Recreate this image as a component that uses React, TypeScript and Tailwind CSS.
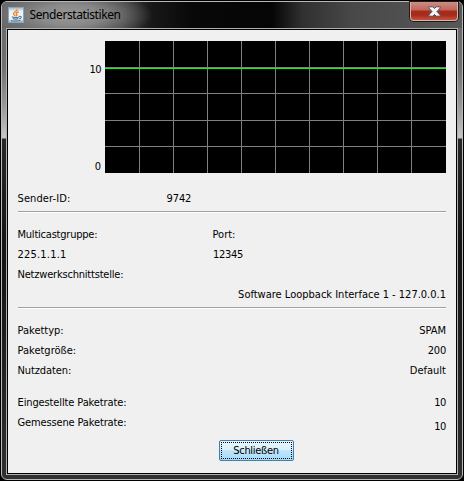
import React from "react";

const verticals = [34, 68, 102, 136, 170, 204, 238, 272, 306];
const horizontals = [26, 52, 79, 105];

function JavaIcon() {
  return (
    <svg className="h-4 w-4 shrink-0" viewBox="0 0 16 16">
      <defs>
        <linearGradient id="tile" x1="0" y1="0" x2="0" y2="1">
          <stop offset="0" stopColor="#9db8c9" />
          <stop offset=".25" stopColor="#eef1f3" />
          <stop offset=".75" stopColor="#f2f4f5" />
          <stop offset="1" stopColor="#8aa9bf" />
        </linearGradient>
      </defs>
      <rect x=".5" y=".5" width="15" height="15" fill="url(#tile)" stroke="#86a6bd" />
      <path d="M9.300 2.200C9.500 4.200 5.300 4.800 5.500 6.800C5.600 7.900 7 8.100 7.200 9.300M10.800 5C8 5.500 7.600 6.500 8.600 7.400C9.200 8.100 8.800 8.700 8.200 9.200" fill="none" stroke="#ee7f22" strokeWidth="1.300" />
      <path d="M3.800 9.800C5 10.700 9.500 10.600 11 9.900M4.800 11.600C6.500 12.200 8.800 12.200 10.300 11.600M3 13.400C5.500 14.200 10.500 14.100 12.500 13.200M11 9.500C14.200 8.700 13.800 11.400 11 11.800" fill="none" stroke="#4f7a9d" strokeWidth="1.100" />
    </svg>
  );
}

function CloseButton() {
  return (
    <div className="mr-[4px] flex h-[19px] w-[48px] items-center justify-center rounded-b-[4px] border border-t-0 border-[#d0b4ae] bg-[linear-gradient(#c98d86_0px,#c2665a_8px,#a62c1c_9px,#a52a1c_13px,#c4523c_18px)] shadow-[0_0_0_1px_#2a1816]">
      <svg className="h-[11px] w-[13px]" viewBox="0 0 13 11">
        <path d="M.8 .8H4.800L6.500 2.500L8.200 .8H12.200V2L9 5.500L12.200 9V10.200H8.200L6.500 8.500L4.800 10.200H.8V9L4 5.500L.8 2Z" fill="#f4f4f4" stroke="#4a5266" strokeWidth="1" />
      </svg>
    </div>
  );
}

function Chart() {
  return (
    <div className="flex h-[132px]">
      <div className="flex w-[83.5px] shrink-0 flex-col items-end justify-between pt-[22px] -mb-px">
        <span className="tracking-[-0.5px]">10</span>
        <span>0</span>
      </div>
      <svg className="ml-[4px] h-[132px] w-[341px] shrink-0" viewBox="0 0 341 132" shapeRendering="crispEdges">
        <rect width="341" height="132" fill="#000" />
        {verticals.map((x) => (
          <rect key={x} x={x} y="0" width="1" height="132" fill="#808080" />
        ))}
        {horizontals.map((y) => (
          <rect key={y} x="0" y={y} width="341" height="1" fill="#808080" />
        ))}
        <rect y="27" width="341" height="1" fill="#00ff00" />
      </svg>
    </div>
  );
}

function Rule() {
  return <div className="ml-[0.5px] h-[2px] shrink-0 border-t border-[#a0a0a0] bg-white" />;
}

export default function App() {
  return (
    <div className="h-[481px] w-[464px] overflow-hidden bg-black p-px font-['DejaVu_Sans_Condensed','DejaVu_Sans',sans-serif] text-[11px] leading-[14px] text-black [font-stretch:condensed]">
      <div className="flex h-[479px] w-[462px] flex-col rounded-[6px] border border-[#b8b8b8] bg-[linear-gradient(#686868_0px,#707070_65px,#999_105px,#c8c8c8_136px,#282828_137px,#141414_250px,#303030_478px)]">
        <div className="flex h-[26px] shrink-0 rounded-t-[5px] bg-[radial-gradient(ellipse_80px_26px_at_70px_13px,#a0a0a0e0_0%,#989898c0_40%,#88888870_70%,#88888800_100%),linear-gradient(90deg,#666_0px,#606060_60px,#404040_120px,#181818_150px,#080808_190px,#050505_270px,#303030_300px,#484848_350px,#585858_460px)]">
          <div className="flex flex-1 items-center pl-[6px]">
            <JavaIcon />
            <span className="ml-[5.5px] font-['Noto_Sans',sans-serif] text-[12px] tracking-[-0.4px]">Senderstatistiken</span>
          </div>
          <CloseButton />
        </div>
        <div className="mx-[4px] h-[447px] border border-[#b0b0b0] bg-black p-px">
          <div className="flex h-[443px] flex-col bg-[#f0f0f0] pt-[11px] pr-[10px] pl-[9.5px]">
            <Chart />
            <div className="mt-[19px] flex">
              <span className="w-[149px] tracking-[0.1px]">Sender-ID:</span>
              <span className="tracking-[-0.1px]">9742</span>
            </div>
            <div className="mt-[5px]"><Rule /></div>
            <div className="mt-[15px] flex">
              <span className="w-[195px] tracking-[-0.22px]">Multicastgruppe:</span>
              <span>Port:</span>
            </div>
            <div className="mt-[6px] flex">
              <span className="w-[195.5px] tracking-[0.2px]">225.1.1.1</span>
              <span className="tracking-[-0.3px]">12345</span>
            </div>
            <span className="mt-[6px] tracking-[-0.2px]">Netzwerkschnittstelle:</span>
            <span className="mt-[6px] self-end">Software Loopback Interface 1 - 127.0.0.1</span>
            <div className="mt-[5px]"><Rule /></div>
            <div className="mt-[15px] flex justify-between"><span>Pakettyp:</span><span>SPAM</span></div>
            <div className="mt-[6px] flex justify-between"><span>Paketgröße:</span><span className="tracking-[-0.2px]">200</span></div>
            <div className="mt-[6px] flex justify-between"><span className="tracking-[-0.1px]">Nutzdaten:</span><span>Default</span></div>
            <div className="mt-[18px] flex justify-between"><span className="tracking-[-0.12px]">Eingestellte Paketrate:</span><span className="tracking-[-0.4px]">10</span></div>
            <div className="mt-[6px] flex justify-between"><span className="tracking-[-0.14px]">Gemessene Paketrate:</span><span className="pt-[4px] tracking-[-0.4px]">10</span></div>
            <button className="mt-[6px] ml-[201.5px] flex h-[21px] w-[75px] shrink-0 rounded-[2px] border border-[#3c7fb1] bg-[linear-gradient(#eaf6fd,#d9f0fc_49%,#bee6fd_50%,#a7d9f5)] p-px">
              <span className="flex h-full w-full items-center justify-center border border-dotted border-black pr-px tracking-[-0.3px]">Schließen</span>
            </button>
          </div>
        </div>
      </div>
    </div>
  );
}
